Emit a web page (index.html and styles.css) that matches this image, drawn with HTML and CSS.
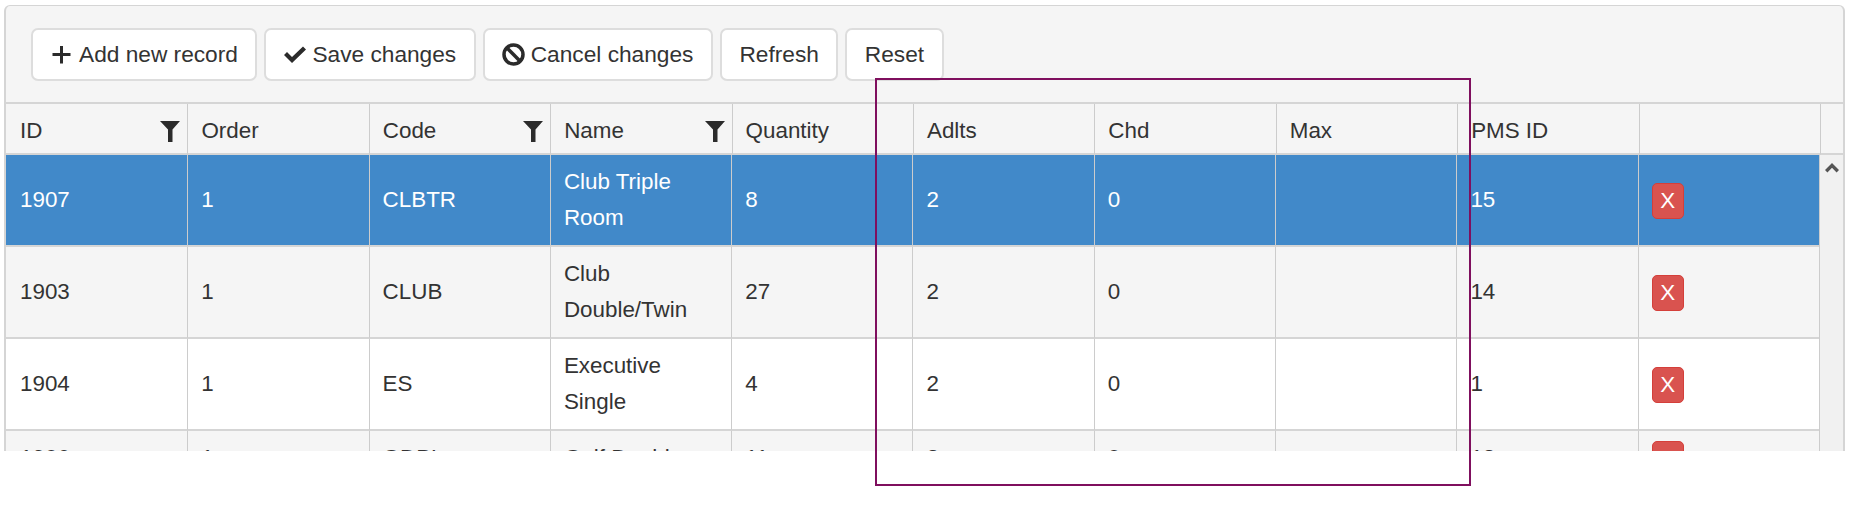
FILE: index.html
```html
<!DOCTYPE html>
<html lang="en">
<head>
  <meta charset="UTF-8">
  <title>Room Types</title>
  <link rel="stylesheet" href="styles.css">
</head>
<body>

  <div class="grid">
    <div class="toolbar">
      <button type="button" class="btn">
        <svg class="btn-icon" viewBox="0 0 23 23"><path d="M9 3h3v7h7.500v3H12v7.500H9V13H1.500v-3H9z"/></svg>
        Add new record
      </button>
      <button type="button" class="btn">
        <svg class="btn-icon" viewBox="0 0 23 23"><path d="M0 12l3-3 5 5L19 3.500l3 3L8 20z"/></svg>
        Save changes
      </button>
      <button type="button" class="btn">
        <svg class="btn-icon btn-icon-ban" viewBox="0 0 23 23"><circle cx="11.500" cy="11.500" r="9.500"/><path d="M4.800 4.800l13.400 13.400"/></svg>
        Cancel changes
      </button>
      <button type="button" class="btn">Refresh</button>
      <button type="button" class="btn">Reset</button>
    </div>

    <table class="grid-head">
      <tr>
        <th>ID <svg class="filter" viewBox="0 0 20 21"><path d="M0 0h20l-7.500 8.500V21H8V8.500z"/></svg></th>
        <th>Order</th>
        <th>Code <svg class="filter" viewBox="0 0 20 21"><path d="M0 0h20l-7.500 8.500V21H8V8.500z"/></svg></th>
        <th>Name <svg class="filter" viewBox="0 0 20 21"><path d="M0 0h20l-7.500 8.500V21H8V8.500z"/></svg></th>
        <th>Quantity</th>
        <th>Adlts</th>
        <th>Chd</th>
        <th>Max</th>
        <th>PMS ID</th>
        <th></th>
        <th class="head-spacer"></th>
      </tr>
    </table>

    <div class="grid-content">
      <table class="grid-body">
        <tr class="selected">
          <td>1907</td><td>1</td><td>CLBTR</td><td>Club Triple Room</td><td>8</td><td>2</td><td>0</td><td></td><td>15</td>
          <td><button type="button" class="btn-delete">X</button></td>
        </tr>
        <tr class="alt">
          <td>1903</td><td>1</td><td>CLUB</td><td>Club Double/Twin</td><td>27</td><td>2</td><td>0</td><td></td><td>14</td>
          <td><button type="button" class="btn-delete">X</button></td>
        </tr>
        <tr>
          <td>1904</td><td>1</td><td>ES</td><td>Executive Single</td><td>4</td><td>2</td><td>0</td><td></td><td>1</td>
          <td><button type="button" class="btn-delete">X</button></td>
        </tr>
        <tr class="alt short">
          <td>1906</td><td>1</td><td>GDBL</td><td>Golf Double</td><td>11</td><td>2</td><td>0</td><td></td><td>13</td>
          <td><button type="button" class="btn-delete">X</button></td>
        </tr>
      </table>
      <div class="scrollbar">
        <svg class="scroll-up" viewBox="0 0 14 10"><path d="M7 0l7 7-2.400 2.400L7 4.800 2.400 9.400 0 7z"/></svg>
      </div>
    </div>
  </div>

  <div class="highlight"></div>

</body>
</html>
```

FILE: styles.css
```css
body {
  margin: 0;
  padding: 5px 0 0 4px;
  background-color: white;
  font-family: "Liberation Sans", Arial, sans-serif;
  font-size: 22.4px;
  color: #333;
}

.grid {
  width: 1841px;
  height: 446px;
  overflow: hidden;
  background-color: #f5f5f5;
  border: 2px solid #d5d5d5;
  border-bottom: none;
  border-top-width: 1px;
  border-radius: 6px 6px 0 0;
  box-sizing: border-box;
}

.toolbar {
  display: flex;
  gap: 7px;
  height: 98px;
  padding: 22px 0 0 25px;
  box-sizing: border-box;
  border-bottom: 2px solid #d5d5d5;
}

.btn {
  display: flex;
  align-items: center;
  height: 53px;
  padding: 0 17.500px;
  background-color: white;
  border: 2px solid #ddd;
  border-radius: 7px;
  font-family: inherit;
  font-size: 22.700px;
  color: #333;
}

.btn-icon {
  width: 23px;
  height: 23px;
  margin-right: 5.500px;
  fill: #2b2b2b;
}

.btn-icon-ban {
  fill: none;
  stroke: #2b2b2b;
  stroke-width: 3.500;
}

table {
  table-layout: fixed;
  border-collapse: separate;
  border-spacing: 0;
}

.grid-head {
  width: 100%;
}

.grid-head th {
  position: relative;
  height: 51px;
  padding: 5px 14px 0 13px;
  box-sizing: border-box;
  font-weight: normal;
  text-align: left;
  border-left: 1px solid #ccc;
  border-bottom: 2px solid #d5d5d5;
  overflow: hidden;
}

.grid-head th:first-child {
  padding-left: 14px;
  border-left: none;
}

.grid-head .head-spacer {
  width: 23px;
  padding: 0;
}

.filter {
  position: absolute;
  top: 17px;
  right: 7px;
  width: 20px;
  height: 21px;
  fill: #2b2b2b;
}

.grid-content {
  display: flex;
  align-items: flex-start;
  background-color: #f1f1f1;
  height: 300px;
}

.grid-body {
  width: 1813px;
  flex: none;
}

.grid-body td {
  height: 92px;
  padding: 0 14px 0 13px;
  box-sizing: border-box;
  line-height: 36px;
  background-color: white;
  border-left: 1px solid #ccc;
  border-bottom: 2px solid #d5d5d5;
}

.grid-body td:first-child {
  padding-left: 14px;
  border-left: none;
}

.grid-body .short td {
  height: 56px;
}

.grid-body .alt td {
  background-color: #f5f5f5;
}

.grid-body .selected td {
  background-color: #4189c9;
  color: white;
}

.btn-delete {
  display: block;
  width: 32px;
  height: 36px;
  margin-top: 2px;
  padding: 0;
  background-color: #d9534f;
  border: 1px solid #d43f3a;
  border-radius: 5px;
  font-family: inherit;
  font-size: 22.400px;
  line-height: 34px;
  color: white;
}

.scrollbar {
  flex: 1;
  height: 100%;
  background-color: #f1f1f1;
  border-left: 1px solid #ccc;
}

.scroll-up {
  display: block;
  width: 14px;
  height: 10px;
  margin: 8px 0 0 5px;
  fill: #555;
}

.highlight {
  position: absolute;
  left: 875px;
  top: 78px;
  width: 592px;
  height: 404px;
  border: 2px solid #7f0f5e;
}
```
